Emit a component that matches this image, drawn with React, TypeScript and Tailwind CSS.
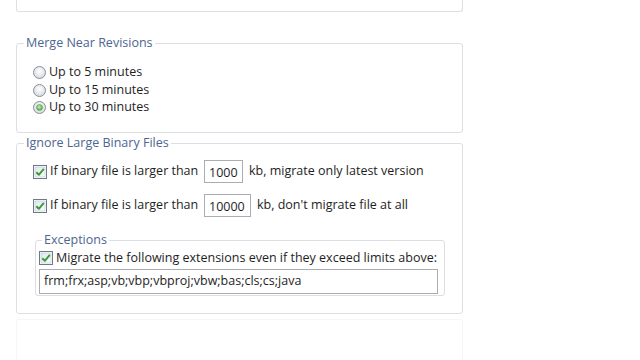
import React from "react";

const font = { fontFamily: '"Open Sans", "Noto Sans", "DejaVu Sans", sans-serif' };

function Radio({ checked }: { checked?: boolean }) {
  return (
    <svg width="13" height="13" viewBox="0 0 13 13" className="shrink-0">
      <defs>
        <radialGradient id="rg" cx="50%" cy="40%" r="60%">
          <stop offset="0%" stopColor="#ffffff" />
          <stop offset="100%" stopColor="#d4d9df" />
        </radialGradient>
        <radialGradient id="rgc" cx="45%" cy="40%" r="60%">
          <stop offset="0%" stopColor="#c8f0b8" />
          <stop offset="100%" stopColor="#4caa3c" />
        </radialGradient>
      </defs>
      <circle cx="6.5" cy="6.5" r="6" fill="url(#rg)" stroke="#8a8f96" strokeWidth="1" />
      {checked && <circle cx="6.5" cy="6.5" r="3" fill="url(#rgc)" stroke="#5c9a4c" strokeWidth="0.6" />}
    </svg>
  );
}

function Check() {
  return (
    <svg width="14" height="14" viewBox="0 0 14 14" className="shrink-0">
      <defs>
        <linearGradient id="cg" x1="0" y1="0" x2="1" y2="1">
          <stop offset="0%" stopColor="#dfe6ee" />
          <stop offset="100%" stopColor="#ffffff" />
        </linearGradient>
      </defs>
      <rect x="0.5" y="0.5" width="13" height="13" fill="#ffffff" stroke="#6f7a86" />
      <rect x="2" y="2" width="10" height="10" fill="url(#cg)" stroke="#b8c4d2" strokeWidth="0.6" />
      <path d="M3.3 7.2 L5.8 9.8 L10.8 3.8" fill="none" stroke="#3c9c3a" strokeWidth="2" strokeLinejoin="round" />
    </svg>
  );
}

function Field({ value, w }: { value: string; w: string }) {
  return (
    <div className={`${w} h-[23px] border border-[#abadb3] bg-white flex items-center pl-[4px] pt-[3px] text-[12.5px] text-[#1e1e1e]`}>
      {value}
    </div>
  );
}

export default function App() {
  return (
    <div className="w-[640px] h-[360px] bg-white overflow-hidden text-[12.5px] text-[#1e1e1e]" style={font}>
      <div className="w-[447px] ml-[16px]">
        {/* top (partially visible) group */}
        <div className="h-[12px] border border-t-0 border-[#dcdfe3] rounded-b-[3px]" />

        {/* Merge Near Revisions */}
        <fieldset className="mt-[23px] h-[98px] border border-[#dcdfe3] rounded-[3px] px-[7px]">
          <legend className="px-[2px] leading-[16px] text-[#4d6591]">Merge Near Revisions</legend>
          <div className="pl-[9px] mt-[13px] flex flex-col">
            <div className="h-[17.5px] flex items-center gap-[3px]"><Radio />Up to 5 minutes</div>
            <div className="h-[17.5px] flex items-center gap-[3px]"><Radio />Up to 15 minutes</div>
            <div className="h-[17.5px] flex items-center gap-[3px]"><Radio checked />Up to 30 minutes</div>
          </div>
        </fieldset>

        {/* Ignore Large Binary Files */}
        <fieldset className="mt-[2px] h-[179px] border border-[#dcdfe3] rounded-[3px] px-[7px]">
          <legend className="px-[2px] leading-[16px] text-[#4d6591]">Ignore Large Binary Files</legend>
          <div className="pl-[9px] mt-[9px] flex items-center">
            <Check />
            <span className="ml-[3px] w-[154px]">If binary file is larger than</span>
            <Field value="1000" w="w-[39px]" />
            <span className="ml-[6px]">kb, migrate only latest version</span>
          </div>
          <div className="pl-[9px] mt-[11px] flex items-center">
            <Check />
            <span className="ml-[3px] w-[154px]">If binary file is larger than</span>
            <Field value="10000" w="w-[47px]" />
            <span className="ml-[6px]">kb, don't migrate file at all</span>
          </div>

          <fieldset className="mt-[15px] ml-[11px] w-[410px] h-[64px] border border-[#dcdfe3] rounded-[3px] px-[6px]">
            <legend className="px-[2px] leading-[16px] text-[#4d6591]">Exceptions</legend>
            <div className="-ml-[3px] mt-[1px] flex items-center">
              <Check />
              <span className="ml-[3px]">Migrate the following extensions even if they exceed limits above:</span>
            </div>
            <div className="-ml-[3px] mt-[1px] w-[399px] h-[25px] border border-[#abadb3] flex items-center pl-[4px] pt-[1px]">
              frm;frx;asp;vb;vbp;vbproj;vbw;bas;cls;cs;java
            </div>
          </fieldset>
        </fieldset>

        {/* next faint group */}
        <div className="mt-[5px] h-[60px] border border-b-0 border-[#f5f6f7] rounded-t-[3px]" />
      </div>
    </div>
  );
}
